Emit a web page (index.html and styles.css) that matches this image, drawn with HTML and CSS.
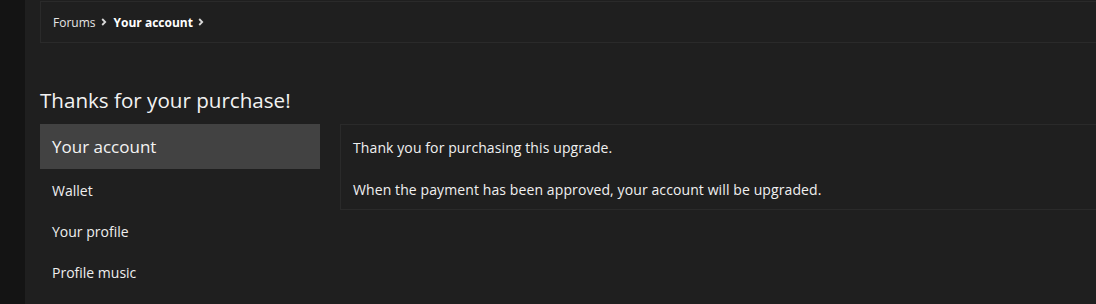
FILE: index.html
```html
<!DOCTYPE html>
<html>
<head>
<meta charset="utf-8">
<link rel="stylesheet" href="styles.css">
</head>
<body>
<div class="page">
  <div class="rail"></div>
  <main class="main">
    <nav class="crumbs">
      <a class="crumb">Forums</a>
      <span class="chev"><svg width="6" height="8" viewBox="0 0 6 8"><path d="M1.2 1 L4.2 4 L1.2 7" fill="none" stroke="#d8d8d8" stroke-width="1.8"/></svg></span>
      <a class="crumb current">Your account</a>
      <span class="chev"><svg width="6" height="8" viewBox="0 0 6 8"><path d="M1.2 1 L4.2 4 L1.2 7" fill="none" stroke="#d8d8d8" stroke-width="1.8"/></svg></span>
    </nav>
    <h1 class="title">Thanks for your purchase!</h1>
    <div class="layout">
      <aside class="side">
        <div class="side-head">Your account</div>
        <div class="side-links">
          <a class="side-link">Wallet</a>
          <a class="side-link">Your profile</a>
          <a class="side-link">Profile music</a>
        </div>
      </aside>
      <section class="panel">
        <p>Thank you for purchasing this upgrade.</p>
        <p>When the payment has been approved, your account will be upgraded.</p>
      </section>
    </div>
  </main>
</div>
</body>
</html>
```
FILE: styles.css
```css
html, body {
  margin: 0;
  padding: 0;
  background: #1f1f1f;
  overflow: hidden;
  height: 304px;
}
body {
  font-family: "Open Sans", "Noto Sans", sans-serif;
  color: #f0f0f0;
}
.page {
  display: flex;
  height: 304px;
}
.rail {
  width: 25px;
  flex: none;
  background: #141414;
}
.main {
  flex: none;
  width: 1100px;
  padding-left: 15px;
  background: #1f1f1f;
}
.crumbs {
  margin-top: 1px;
  height: 40px;
  border: 1px solid #2a2a2a;
  border-right: none;
  display: flex;
  align-items: center;
  padding-left: 12px;
  font-size: 12px;
}
.crumb {
  color: #e6e6e6;
}
.crumb.current {
  font-weight: 700;
  color: #ffffff;
}
.chev {
  display: flex;
  align-items: center;
  margin: 0 7px 0 5px;
}
.title {
  margin: 44px 0 0 0;
  font-size: 20.6px;
  font-weight: 400;
  line-height: 26px;
  color: #f2f2f2;
}
.layout {
  display: flex;
  gap: 20px;
  margin-top: 11px;
}
.side {
  width: 280px;
  flex: none;
  display: flex;
  flex-direction: column;
}
.side-head {
  height: 45px;
  background: #424242;
  display: flex;
  align-items: center;
  padding-left: 12px;
  font-size: 17px;
  color: #f4f4f4;
}
.side-links {
  display: flex;
  flex-direction: column;
  padding-top: 1px;
}
.side-link {
  height: 41px;
  display: flex;
  align-items: center;
  padding-left: 12px;
  font-size: 14px;
  color: #eeeeee;
}
.panel {
  flex: 1;
  height: 83px;
  border: 1px solid #2a2a2a;
  border-right: none;
  padding: 1px 12px 0;
  box-sizing: content-box;
  font-size: 14px;
  letter-spacing: 0.1px;
  color: #f0f0f0;
}
.panel p {
  margin: 0;
  height: 42px;
  display: flex;
  align-items: center;
}
```
